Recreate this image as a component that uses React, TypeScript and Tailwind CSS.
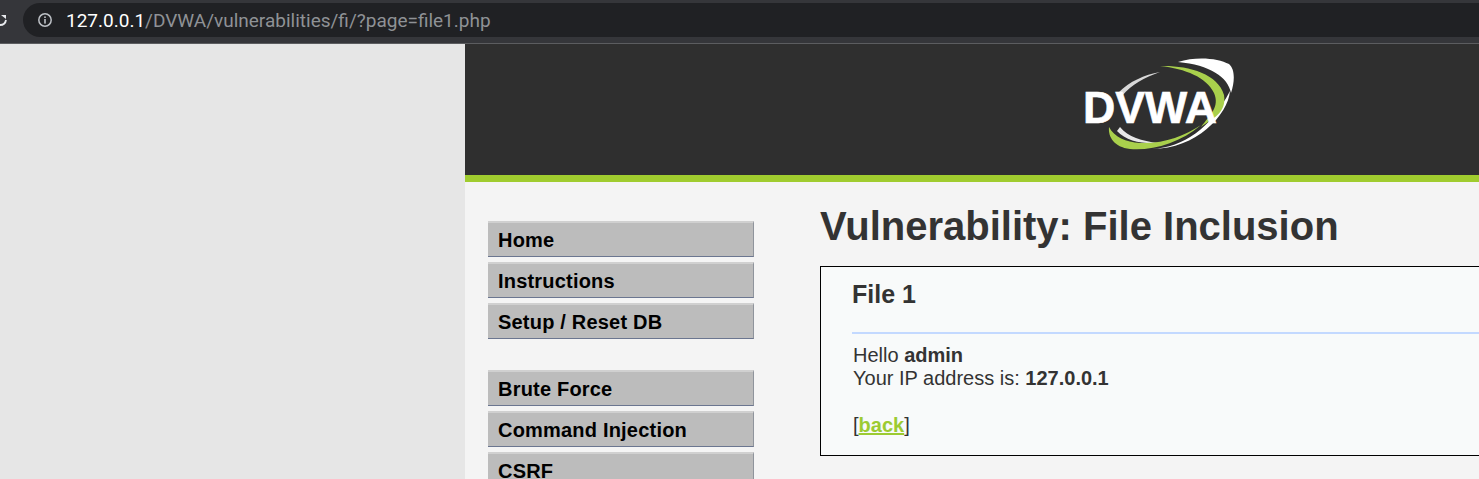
const FONT = "font-['Liberation_Sans',Arial,sans-serif]";

function MenuItem({ label }: { label: string }) {
  return (
    <div className="h-[36px] mb-[5px] pl-[10px] flex items-center bg-[#bcbcbc] border-t-2 border-t-[#d0d0d0] border-r border-r-[#8f949c] border-b border-b-[#6b7690] text-[20px] font-bold text-black leading-none tracking-[0.2px]">
      {label}
    </div>
  );
}

function Logo() {
  return (
    <svg width="170" height="96" viewBox="0 0 170 96" className="block">
      {/* white outer swoosh, top right */}
      <path d="M110 5 C128 -1 150 1 161 7 C167 12 167 24 163 36 C160 20 142 8 110 5 Z" fill="#ffffff" />
      {/* white lower swoosh */}
      <path d="M162 34 C160 58 128 92 84 92 C116 90 142 72 162 34 Z" fill="#ffffff" />
      {/* thin white inner arcs */}
      <path d="M50 36 C62 24 76 18 92 15 C76 21 64 27 54 39 Z" fill="#d8d8d8" />
      <path d="M52 70 C60 80 74 84 90 86 C74 87 58 84 49 74 Z" fill="#e8e8e8" />
      {/* green swoosh */}
      <path d="M92 9 C118 8 150 16 156 38 C159 56 144 62 133 70 C142 58 152 50 146 36 C138 20 118 12 92 9 Z" fill="#a9d04c" />
      <path d="M133 68 C112 86 84 94 62 92 C46 90 40 80 41 70 C46 80 58 85 72 86 C96 87 116 79 133 68 Z" fill="#a9d04c" />
      <text x="15" y="66" fontFamily="'Liberation Sans', Arial, sans-serif" fontWeight="700" fontSize="44" fill="#ffffff" stroke="#ffffff" strokeWidth="0.6" textLength="134" lengthAdjust="spacingAndGlyphs">DVWA</text>
    </svg>
  );
}

export default function App() {
  return (
    <div className={`${FONT} w-[1479px] h-[479px] overflow-hidden flex flex-col bg-[#e6e6e6]`}>
      {/* browser toolbar */}
      <div className="h-[44px] shrink-0 bg-[#35363a] border-b border-b-[#5c5d60] flex items-start pt-[3px] relative">
        <svg width="8" height="16" viewBox="0 0 8 16" className="mt-[9px] shrink-0">
          <path d="M0 13 C3 13 5.5 11 6 8" fill="none" stroke="#e8eaed" strokeWidth="1.8" />
          <path d="M1 3 L6 3 L6 7 Z" fill="#e8eaed" />
        </svg>
        <div className="ml-[15px] flex-1 h-[34px] bg-[#202124] rounded-l-[17px] flex items-center pl-[14px]">
          <svg width="16" height="16" viewBox="0 0 16 16" className="shrink-0">
            <circle cx="8" cy="8" r="6.2" fill="none" stroke="#bdc1c6" strokeWidth="1.5" />
            <rect x="7.2" y="7" width="1.6" height="4.6" fill="#bdc1c6" />
            <rect x="7.2" y="4.4" width="1.6" height="1.6" fill="#bdc1c6" />
          </svg>
          <span className="ml-[13px] text-[19px] leading-none text-[#8f9296] whitespace-nowrap font-['Roboto',sans-serif]">
            <span className="text-white">127.0.0.1</span>/DVWA/vulnerabilities/fi/?page=file1.php
          </span>
        </div>
      </div>

      <div className="flex flex-1 min-h-0">
        <div className="w-[465px] shrink-0" />
        <div className="flex-1 min-w-0 flex flex-col bg-[#f4f4f4]">
          {/* DVWA header */}
          <div className="h-[138px] shrink-0 bg-[#2f2f2f] border-b-[7px] border-b-[#a0cc2f] flex justify-center pl-[361px] pt-[13px]">
            <Logo />
          </div>

          <div className="flex flex-1 min-h-0 pl-[23px] pt-[39px]">
            {/* side menu */}
            <div className="w-[266px] shrink-0">
              <MenuItem label="Home" />
              <MenuItem label="Instructions" />
              <MenuItem label="Setup / Reset DB" />
              <div className="h-[26px]" />
              <MenuItem label="Brute Force" />
              <MenuItem label="Command Injection" />
              <MenuItem label="CSRF" />
            </div>

            {/* main body */}
            <div className="flex-1 min-w-0 ml-[66px] -mt-[1px]">
              <h1 className="text-[40px] leading-[46px] font-bold text-[#333333] whitespace-nowrap mt-[-17px] mb-[17px]">
                Vulnerability: File Inclusion
              </h1>
              <div className="h-[190px] border border-black border-r-0 bg-[#f8fafa] pl-[31px] text-[#333333]">
                <h3 className="text-[25px] leading-[30px] font-bold mt-[12px]">File 1</h3>
                <div className="h-[2px] bg-[#c3d9ff] mt-[23px]" />
                <div className="text-[20px] leading-[23px] mt-[10px] pl-[1px]">
                  <div>
                    Hello <b>admin</b>
                  </div>
                  <div>
                    Your IP address is: <b>127.0.0.1</b>
                  </div>
                  <div className="mt-[24px]">
                    [<a className="font-bold text-[#9ccb32] underline">back</a>]
                  </div>
                </div>
              </div>
            </div>
          </div>
        </div>
      </div>
    </div>
  );
}
